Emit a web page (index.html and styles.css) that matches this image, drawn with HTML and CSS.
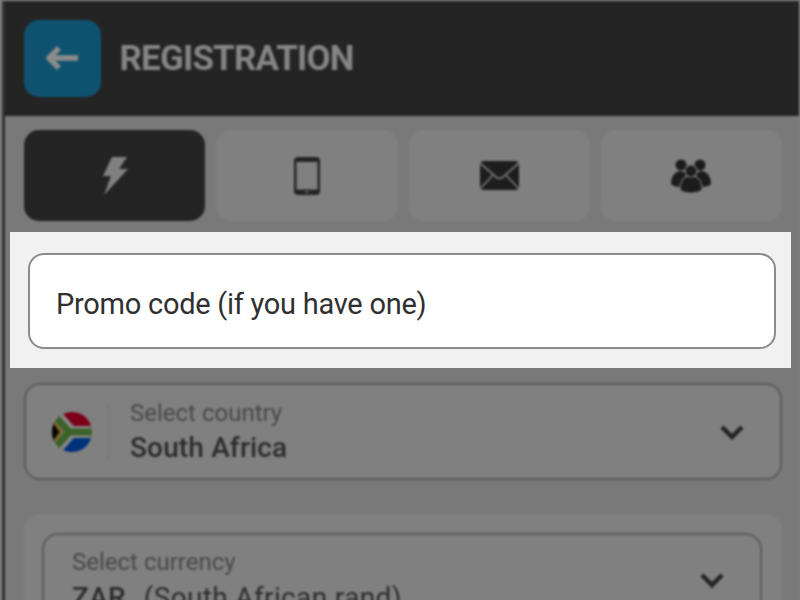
FILE: index.html
```html
<!DOCTYPE html>
<html lang="en">
<head>
<meta charset="utf-8">
<title>Registration</title>
<link rel="stylesheet" href="styles.css">
</head>
<body>
<div class="page">
  <div class="screen">
    <header class="header">
      <div class="back">
        <svg width="36" height="28" viewBox="0 0 36 28"><path d="M33 13H4M14 3L4 13L14 23" fill="none" stroke="#8c8c8c" stroke-width="5.500" stroke-linejoin="round"/></svg>
      </div>
      <h1 class="title">REGISTRATION</h1>
    </header>
    <main class="content">
      <nav class="tabs">
        <div class="tab active">
          <svg width="26" height="38" viewBox="0 0 26 38"><path d="M10 0H25L17 12H26L2 38L9 19H1Z" fill="#808080"/></svg>
        </div>
        <div class="tab">
          <svg width="26" height="38" viewBox="0 0 26 38"><path fill-rule="evenodd" d="M4 0H22Q26 0 26 4V34Q26 38 22 38H4Q0 38 0 34V4Q0 0 4 0ZM2.500 5V32.500H23.500V5Z" fill="#242424"/><path d="M11 35H15" stroke="#666" stroke-width="1.500"/></svg>
        </div>
        <div class="tab">
          <svg width="39" height="29" viewBox="0 0 39 29"><rect width="39" height="29" rx="4" fill="#1d1d1d"/><path d="M0 2L16 16Q19.500 19 23 16L39 2M0 28L13 14M39 28L26 14" fill="none" stroke="#747474" stroke-width="1.700"/></svg>
        </div>
        <div class="tab">
          <svg width="40" height="34" viewBox="0 0 40 34"><g fill="#1b1b1b"><circle cx="10" cy="6" r="5.500"/><circle cx="29" cy="6" r="5.500"/><path d="M9 12Q0 14 0 25Q3 28 9 28L16 14ZM31 12Q40 14 40 25Q37 28 31 28L24 14Z"/></g><g fill="#1b1b1b" stroke="#747474" stroke-width="1.200"><path d="M20 17Q31 17 31 31Q27 34 20 34Q13 34 9 31Q9 17 20 17Z"/><circle cx="20" cy="12" r="6"/></g></svg>
        </div>
      </nav>
      <section class="select country">
        <svg class="flag" width="40" height="40" viewBox="0 0 40 40">
          <defs><clipPath id="disc"><circle cx="20" cy="20" r="20"/></clipPath></defs>
          <g clip-path="url(#disc)">
            <rect width="40" height="20" fill="#7b0018"/>
            <rect y="20" width="40" height="20" fill="#00327b"/>
            <path d="M-2 -4L19 20L-2 44M17 20H40" fill="none" stroke="#868686" stroke-width="12"/>
            <path d="M-4 -4L17 20L-4 44M17 20H40" fill="none" stroke="#3d6229" stroke-width="7"/>
            <path d="M-2 5L9 20L-2 35Z" fill="#060606" stroke="#80631c" stroke-width="2.500"/>
          </g>
        </svg>
        <div class="divider"></div>
        <div class="labels">
          <div class="label">Select country</div>
          <div class="value">South Africa</div>
        </div>
        <svg class="chevron" width="24" height="16" viewBox="0 0 24 16"><path d="M2 3L12 13L22 3" fill="none" stroke="#242424" stroke-width="4.500"/></svg>
      </section>
      <section class="panel">
        <div class="select currency">
          <div class="labels">
            <div class="label">Select currency</div>
            <div class="value"><span>ZAR</span><span class="name">(South African rand)</span></div>
          </div>
          <svg class="chevron" width="24" height="16" viewBox="0 0 24 16"><path d="M2 2L12 12L22 2" fill="none" stroke="#242424" stroke-width="4.500"/></svg>
        </div>
      </section>
    </main>
  </div>
  <div class="spotlight">
    <div class="promo">Promo code (if you have one)</div>
  </div>
</div>
</body>
</html>
```
FILE: styles.css
```css
* { box-sizing: border-box; }
body { margin: 0; background: #808080; font-family: Roboto, sans-serif; }
svg { display: block; flex: none; }
.page { position: relative; width: 800px; height: 600px; overflow: hidden; padding: 1px 1px 0 2px; }
.screen { height: 640px; background: #797979; border-left: 3px solid #303037; filter: blur(1.2px); }
.header { height: 115px; background: #242424; display: flex; align-items: center; padding-left: 19px; gap: 18.5px; }
.back { width: 77px; height: 77px; border-radius: 15px; background: #0f5270; display: flex; align-items: center; justify-content: center; }
.title { margin: 0; font-size: 35px; line-height: 40px; font-weight: 700; letter-spacing: -0.83px; color: #858585; }
.content { padding: 14px 17px 0 19px; }
.tabs { display: grid; grid-template-columns: repeat(4, 1fr); gap: 11px; height: 91px; }
.tab { background: #808080; border-radius: 15px; display: flex; align-items: center; justify-content: center; }
.active { background: #242424; }
.select { display: flex; align-items: center; border: 2px solid #5c5c5c; border-radius: 16px; background: #808080; }
.country { margin-top: 162px; height: 97px; padding: 0 36px 0 26px; }
.divider { width: 1px; height: 58px; background: #747474; margin: 0 21px 0 16px; }
.labels { flex: 1; white-space: nowrap; padding-top: 2px; }
.label { font-size: 24px; line-height: 30px; color: #484848; }
.value { font-size: 28px; line-height: 38px; font-weight: 500; letter-spacing: 0.15px; color: #2c2c2c; padding-top: 1px; }
.value .name { font-weight: 400; margin-left: 18px; letter-spacing: 0.36px; }
.currency .value { padding-top: 2px; }
.panel { margin-top: 34px; height: 180px; border-radius: 16px; background: #808080; padding: 19px 20px 0 18px; }
.currency { height: 95px; padding: 0 36px 0 28px; }
.spotlight { position: absolute; left: 10px; top: 232px; width: 781px; height: 136px; background: #f1f1f1; padding: 21px 15px 19px 18px; }
.promo { height: 96px; border: 2px solid #8b8b8b; border-radius: 16px; background: #fff; padding: 3px 0 0 26px; line-height: 92px; font-size: 29px; letter-spacing: -0.26px; color: #303030; white-space: nowrap; }
```
